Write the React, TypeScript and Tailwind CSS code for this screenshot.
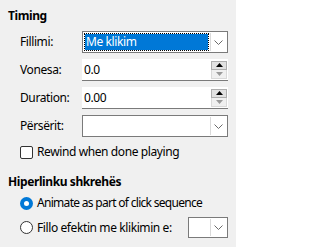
import React from "react";

const Chevron = () => (
  <svg width="9" height="5" viewBox="0 0 9 5" className="block">
    <polyline points="0.5,0.5 4.5,4.5 8.5,0.5" fill="none" stroke="#6b6b6b" strokeWidth="1" />
  </svg>
);

const DropButton = () => (
  <div className="my-[1px] mr-[1px] flex w-[16px] shrink-0 items-center justify-center border-l border-[#dadada] bg-white">
    <Chevron />
  </div>
);

const Combo = ({ value, selected, className }: { value?: string; selected?: boolean; className?: string }) => (
  <div className={`flex shrink-0 border border-[#7a7a7a] bg-white ${className ?? "h-[22px]"}`}>
    {selected ? (
      <div className="m-[1px] flex flex-1 items-center border border-dotted border-black bg-[#0078d7] bg-clip-padding pl-[1px] text-white">
        {value}
      </div>
    ) : (
      <div className="flex-1 pl-[3px]">{value}</div>
    )}
    <DropButton />
  </div>
);

const Spin = ({ value }: { value: string }) => (
  <div className="flex h-[22px] items-center border-b border-[#7a7a7a] bg-white">
    <span className="flex-1 pl-[2px]">{value}</span>
    <div className="mr-[1px] flex w-[16px] flex-col">
      <div className="flex h-[9px] items-center justify-center border border-[#adadad] bg-[#e1e1e1]">
        <svg width="7" height="4" viewBox="0 0 7 4">
          <polygon points="0,4 7,4 3.5,0" fill="#000" />
        </svg>
      </div>
      <div className="flex h-[9px] items-center justify-center border border-t-0 border-[#d9d9d9] bg-[#f0f0f0]">
        <svg width="7" height="4" viewBox="0 0 7 4">
          <polygon points="0,0 7,0 3.5,4" fill="#9a9a9a" />
        </svg>
      </div>
    </div>
  </div>
);

const Row = ({ label, children }: { label: string; children: React.ReactNode }) => (
  <div className="flex items-center">
    <span className="w-[74px] shrink-0 pl-3">{label}</span>
    <div className="w-[146px] shrink-0">{children}</div>
  </div>
);

export default function App() {
  return (
    <div
      className="h-[247px] w-[236px] overflow-hidden bg-[#f0f0f0] pl-2 pt-2 text-[12px] leading-4 tracking-[-0.4px] text-black"
      style={{ fontFamily: '"Noto Sans", sans-serif' }}
    >
      <div className="font-bold">Timing</div>
      <div className="mt-[7px] flex flex-col gap-[6px]">
        <Row label="Fillimi:">
          <Combo value="Me klikim" selected />
        </Row>
        <Row label="Vonesa:">
          <Spin value="0.0" />
        </Row>
        <Row label="Duration:">
          <Spin value="0.00" />
        </Row>
        <Row label="Përsërit:">
          <Combo />
        </Row>
      </div>
      <label className="mt-[7px] flex h-4 items-center pl-3">
        <span className="h-[13px] w-[13px] shrink-0 rounded-[2px] border border-[#333] bg-white" />
        <span className="ml-1">Rewind when done playing</span>
      </label>
      <div className="mt-[14px] font-bold">Hiperlinku shkrehës</div>
      <div className="mt-[5px] flex h-4 items-center pl-3">
        <span className="flex h-[13px] w-[13px] shrink-0 items-center justify-center rounded-full bg-[#0078d7]">
          <span className="h-[5px] w-[5px] rounded-full bg-white" />
        </span>
        <span className="ml-1 whitespace-nowrap tracking-[-0.7px]">Animate as part of click sequence</span>
      </div>
      <div className="mt-[6px] flex items-center pl-3">
        <span className="h-[13px] w-[13px] shrink-0 rounded-full border border-[#333] bg-white" />
        <span className="ml-1 w-[151px] shrink-0 whitespace-nowrap">Fillo efektin me klikimin e:</span>
        <Combo className="h-[21px] w-[40px]" />
      </div>
    </div>
  );
}
